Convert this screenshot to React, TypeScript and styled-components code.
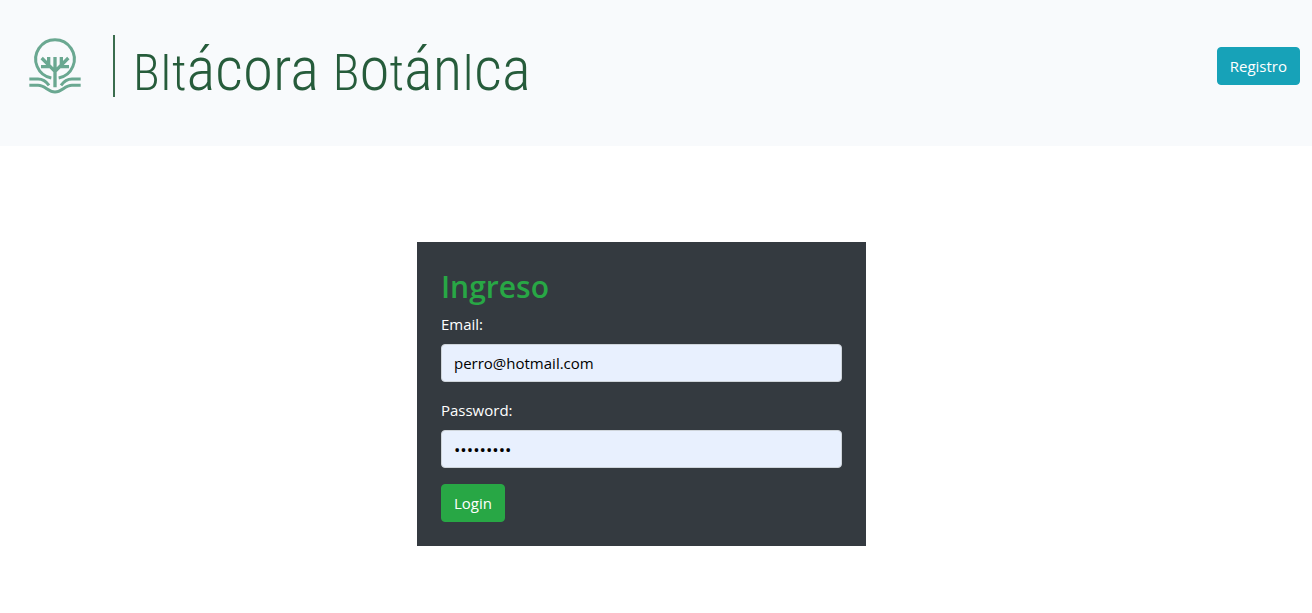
import React from "react";
import styled, { createGlobalStyle } from "styled-components";

const GlobalStyle = createGlobalStyle`
  *, *::before, *::after { box-sizing: border-box; }
  body {
    margin: 0;
    background: #fff;
    color: #212529;
    font-family: "Segoe UI", "Open Sans", "Noto Sans", sans-serif;
    font-size: 15px;
    line-height: 24px;
  }
`;

const Navbar = styled.header`
  display: flex;
  align-items: center;
  justify-content: space-between;
  padding: 32px 12px 46px 28px;
  background: #f8fafc;
`;

const Brand = styled.a`
  display: flex;
  align-items: center;
  height: 68px;
  color: #265c3b;
  text-decoration: none;
`;

const Emblem = styled.svg`
  width: 54px;
  height: 58px;
  fill: none;
  stroke: #6aa891;
  stroke-width: 9;
`;

const Divider = styled.span`
  width: 2px;
  height: 62px;
  margin: 0 18px 0 31px;
  background: #3b6d4e;
`;

const Wordmark = styled.span`
  padding-top: 10px;
  font-family: "Roboto Condensed", "Liberation Sans Narrow", Roboto, sans-serif;
  font-size: 61px;
  font-weight: 300;
  line-height: 68px;
  white-space: nowrap;
`;

const Capital = styled.span`
  font-size: 50px;
`;

const Button = styled.button<{ $color: string }>`
  padding: 6px 12px;
  border: 1px solid ${(p) => p.$color};
  border-radius: 4px;
  background: ${(p) => p.$color};
  color: #fff;
  font: inherit;
  cursor: pointer;
`;

const Main = styled.main`
  display: flex;
  justify-content: center;
  padding: 96px 29px 64px 0;
`;

const Card = styled.form`
  width: 35%;
  min-width: 300px;
  padding: 24px;
  background: #343a40;
`;

const Title = styled.h1`
  margin: 0 0 4px;
  color: #28a745;
  font-size: 30px;
  font-weight: 600;
  line-height: 42px;
`;

const Field = styled.div`
  margin-bottom: 16px;
`;

const Label = styled.label`
  display: block;
  margin-bottom: 8px;
  color: #fff;
`;

const Input = styled.input`
  display: block;
  width: 100%;
  height: 38px;
  padding: 6px 12px;
  border: 1px solid #ced4da;
  border-radius: 4px;
  background: #e8f0fe;
  color: #000;
  font: inherit;

  &[type="password"] {
    font-size: 17px;
  }
`;

export default function App() {
  return (
    <>
      <GlobalStyle />
      <Navbar>
        <Brand href="#">
          <Emblem viewBox="24 36 162 174" aria-hidden="true">
            <path d="M94 159A58 58 0 1 1 116 159" />
            <path strokeWidth="10" d="M105 96V187M86 96V124M124 96V124M65 99L105 139L145 99M63 125H92M118 125H147" />
            <path d="M28 162H54C68 162 80 171 87 181M182 162H156C142 162 130 171 123 181" />
            <path d="M28 181H54C76 181 84 201 105 201S134 181 156 181H182" />
          </Emblem>
          <Divider />
          <Wordmark>
            <Capital>BIt</Capital>ácora <Capital>B</Capital>o<Capital>t</Capital>án<Capital>I</Capital>ca
          </Wordmark>
        </Brand>
        <Button type="button" $color="#17a2b8">Registro</Button>
      </Navbar>
      <Main>
        <Card onSubmit={(e) => e.preventDefault()}>
          <Title>Ingreso</Title>
          <Field>
            <Label htmlFor="email">Email:</Label>
            <Input id="email" type="email" defaultValue="perro@hotmail.com" />
          </Field>
          <Field>
            <Label htmlFor="password">Password:</Label>
            <Input id="password" type="password" defaultValue="perro1234" />
          </Field>
          <Button type="submit" $color="#28a745">Login</Button>
        </Card>
      </Main>
    </>
  );
}
